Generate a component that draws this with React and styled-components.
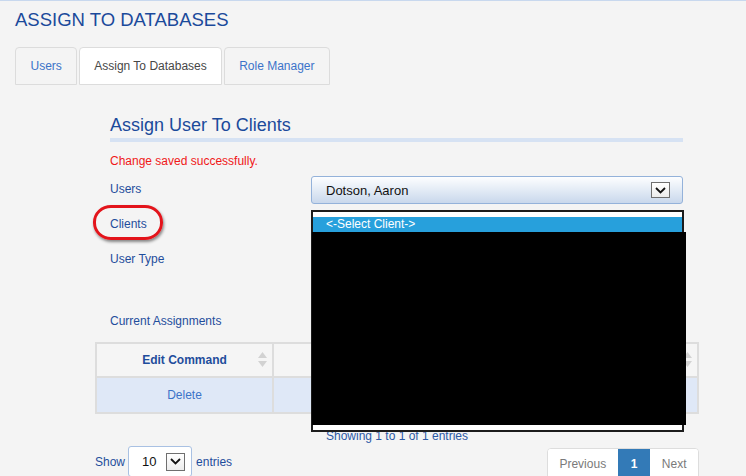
import React from "react";
import styled, { createGlobalStyle } from "styled-components";

const GlobalStyle = createGlobalStyle`
  html, body {
    margin: 0;
    padding: 0;
    background: #f4f4f4;
  }
  body {
    border-top: 1px solid #c8d8ee;
    font-family: "Liberation Sans", Arial, sans-serif;
    font-size: 12px;
    color: #333;
    overflow: hidden;
  }
`;

const Page = styled.div`
  padding-left: 15px;
  height: 475px;
`;

const PageTitle = styled.h1`
  margin: 9px 0 0;
  font-size: 18.5px;
  line-height: 20px;
  font-weight: normal;
  color: #1b4a9b;
`;

const Tabs = styled.div`
  display: flex;
  gap: 1.4px;
  margin-top: 17px;
`;

const Tab = styled.div`
  height: 36px;
  line-height: 36px;
  padding: 0 14.5px;
  border: 1px solid #dcdcdc;
  border-radius: 4px 4px 0 0;
  background: ${({ $active }) => ($active ? "#ffffff" : "#f4f4f4")};
  color: ${({ $active }) => ($active ? "#474747" : "#3b73c9")};
`;

const Panel = styled.div`
  width: 604px;
  margin: 30px 0 0 80px;
`;

const FormArea = styled.div`
  padding: 0 16px 0 15px;
`;

const SectionTitle = styled.h2`
  margin: 0;
  font-size: 18px;
  line-height: 20px;
  font-weight: normal;
  color: #1b4a9b;
`;

const Rule = styled.div`
  height: 4px;
  margin-top: 3px;
  background: #d6e2f3;
`;

const Message = styled.div`
  margin-top: 12px;
  line-height: 14px;
  color: #f01818;
`;

const FormGrid = styled.div`
  display: grid;
  grid-template-columns: 201px 1fr;
  grid-auto-rows: 28px;
  row-gap: 7px;
  margin-top: 8px;
`;

const Label = styled.div`
  position: relative;
  padding-top: 6px;
  line-height: 14px;
  color: #1f4d9c;
`;

const Highlight = styled.div`
  position: absolute;
  left: -17px;
  top: -6px;
  width: 70px;
  height: 35px;
  box-sizing: border-box;
  border: 3.5px solid #e3141b;
  border-radius: 18px / 17px;
  box-shadow: 1px 2px 3px rgba(0, 0, 0, 0.45);
`;

const Control = styled.div`
  position: relative;
`;

const Select = styled.div`
  box-sizing: border-box;
  height: 28px;
  display: flex;
  align-items: center;
  justify-content: space-between;
  padding: 0 12px 0 14px;
  border: 1px solid #94b2da;
  border-radius: 3px;
  background: linear-gradient(#fdfeff, #c9d8ec);
  font-size: 13px;
  color: #111;
`;

const ArrowBox = styled.div`
  box-sizing: border-box;
  width: ${({ $w }) => $w || 19}px;
  height: ${({ $h }) => $h || 16}px;
  display: flex;
  align-items: center;
  justify-content: center;
  border: 1px solid #6f6f6f;
  background: linear-gradient(#ffffff, #ececec);
`;

const ListBox = styled.div`
  position: absolute;
  z-index: 5;
  top: -1px;
  left: 0;
  right: -1px;
  height: 222px;
  box-sizing: border-box;
  padding-top: 5px;
  border: 2px solid #1c1c1c;
  background: #ffffff;
`;

const Option = styled.div`
  height: 15px;
  line-height: 15px;
  padding-left: 13px;
  font-size: 12px;
  background: ${({ $selected }) => ($selected ? "#27a0dc" : "transparent")};
  color: ${({ $selected }) => ($selected ? "#ffffff" : "#111")};
`;

const Redaction = styled.div`
  position: absolute;
  top: 20px;
  left: -1px;
  width: 374px;
  height: 193px;
  background: #000000;
`;

const SubTitle = styled.div`
  margin-top: 40px;
  line-height: 14px;
  color: #1f4d9c;
`;

const Table = styled.table`
  width: 604px;
  margin-top: 14px;
  border-collapse: separate;
  border-spacing: 0;
  border-top: 2px solid #dddddd;
  border-left: 2px solid #dddddd;
`;

const Th = styled.th`
  position: relative;
  width: ${({ $w }) => ($w ? `${$w}px` : "auto")};
  padding: 0;
  line-height: 32px;
  border-right: 2px solid #dddddd;
  border-bottom: 2px solid #dddddd;
  background: #f5f5f5;
  color: #1f4d9c;
  font-size: 12px;
  font-weight: bold;
  text-align: center;
`;

const Td = styled.td`
  padding: 0;
  line-height: 34px;
  border-right: 2px solid #dddddd;
  border-bottom: 2px solid #dddddd;
  background: #dfe8f7;
  text-align: center;
  color: #3b73c9;
`;

const SortMark = styled.span`
  position: absolute;
  right: 5px;
  top: 8px;
  display: flex;
`;

const Info = styled.div`
  margin-top: 15px;
  line-height: 14px;
  text-align: center;
  color: #2c59a6;
`;

const Footer = styled.div`
  display: flex;
  justify-content: space-between;
  align-items: flex-start;
  margin-top: 3px;
`;

const Length = styled.div`
  display: flex;
  align-items: center;
  color: #1f4d9c;
`;

const SmallSelect = styled.div`
  box-sizing: border-box;
  width: 64px;
  height: 31px;
  margin: 0 4px 0 3px;
  display: flex;
  align-items: center;
  gap: 9px;
  padding-left: 13px;
  border: 1px solid #a9c1e3;
  border-radius: 3px;
  background: #ffffff;
  font-size: 13px;
  color: #111;
`;

const Pager = styled.div`
  display: flex;
  margin-top: 2px;
  border: 1px solid #dddddd;
  border-radius: 4px;
  overflow: hidden;
  background: #ffffff;
`;

const PageItem = styled.div`
  line-height: 30px;
  padding: 0 ${({ $pad }) => $pad}px;
  background: ${({ $active }) => ($active ? "#337ab7" : "#ffffff")};
  color: ${({ $active }) => ($active ? "#ffffff" : "#7a7a7a")};
  font-weight: ${({ $active }) => ($active ? "bold" : "normal")};
  & + & {
    border-left: ${({ $active }) => ($active ? "none" : "1px solid #dddddd")};
  }
`;

const Chevron = () => (
  <svg width="11" height="7" viewBox="0 0 11 7">
    <path d="M1 1l4.5 4.5L10 1" fill="none" stroke="#111" strokeWidth="1.8" />
  </svg>
);

const SortIcon = () => (
  <svg width="9" height="15" viewBox="0 0 9 15">
    <path d="M4.5 0L9 6H0z" fill="#d2d2d2" />
    <path d="M0 9h9l-4.5 6z" fill="#d2d2d2" />
  </svg>
);

export default function App() {
  return (
    <Page>
      <GlobalStyle />
      <PageTitle>ASSIGN TO DATABASES</PageTitle>
      <Tabs>
        <Tab>Users</Tab>
        <Tab $active>Assign To Databases</Tab>
        <Tab>Role Manager</Tab>
      </Tabs>

      <Panel>
        <FormArea>
          <SectionTitle>Assign User To Clients</SectionTitle>
          <Rule />
          <Message>Change saved successfully.</Message>
          <FormGrid>
            <Label>Users</Label>
            <Control>
              <Select>
                Dotson, Aaron
                <ArrowBox><Chevron /></ArrowBox>
              </Select>
            </Control>

            <Label>
              Clients
              <Highlight />
            </Label>
            <Control>
              <Select />
              <ListBox>
                <Option $selected>&lt;-Select Client-&gt;</Option>
                <Redaction />
              </ListBox>
            </Control>

            <Label>User Type</Label>
            <Control>
              <Select />
            </Control>
          </FormGrid>
          <SubTitle>Current Assignments</SubTitle>
        </FormArea>

        <Table>
          <thead>
            <tr>
              <Th $w={175}>
                Edit Command
                <SortMark><SortIcon /></SortMark>
              </Th>
              <Th>
                <SortMark><SortIcon /></SortMark>
              </Th>
            </tr>
          </thead>
          <tbody>
            <tr>
              <Td>Delete</Td>
              <Td />
            </tr>
          </tbody>
        </Table>

        <Info>Showing 1 to 1 of 1 entries</Info>

        <Footer>
          <Length>
            Show
            <SmallSelect>
              10
              <ArrowBox $w={19} $h={18}><Chevron /></ArrowBox>
            </SmallSelect>
            entries
          </Length>
          <Pager>
            <PageItem $pad={11.5}>Previous</PageItem>
            <PageItem $pad={13} $active>1</PageItem>
            <PageItem $pad={11.5}>Next</PageItem>
          </Pager>
        </Footer>
      </Panel>
    </Page>
  );
}
